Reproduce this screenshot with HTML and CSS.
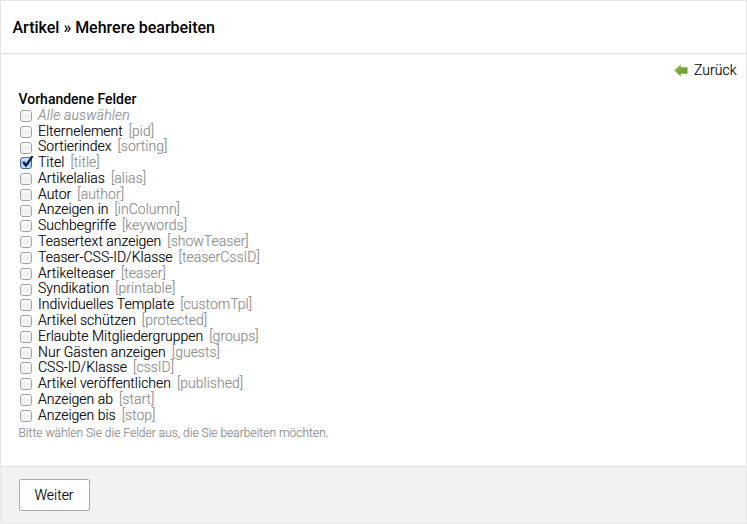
FILE: index.html
```html
<!DOCTYPE html>
<html lang="de">
<head>
<meta charset="utf-8">
<title>Artikel » Mehrere bearbeiten</title>
<link rel="stylesheet" href="styles.css">
</head>
<body>
<main class="panel">
<h1 class="headline">Artikel » Mehrere bearbeiten</h1>
<div class="buttons"><a class="back"><svg class="arrow" width="14" height="13" viewBox="0 0 14 13"><defs><linearGradient id="g" x1="0" y1="0" x2="1" y2="1"><stop offset="0" stop-color="#92b94d"/><stop offset="1" stop-color="#64932b"/></linearGradient></defs><path d="M.3 6.5 6.8.5V3.3H13.5V9.7H6.8V12.5Z" fill="url(#g)"/></svg><span>Zurück</span></a></div>
<form class="form">
<fieldset class="fields">
<h2 class="legend">Vorhandene Felder</h2>
<label class="row all"><input type="checkbox"><span>Alle auswählen</span></label>
<label class="row"><input type="checkbox"><span>Elternelement</span><span class="key">[pid]</span></label>
<label class="row"><input type="checkbox"><span>Sortierindex</span><span class="key">[sorting]</span></label>
<label class="row"><input type="checkbox" checked><svg class="tick" width="15" height="14" viewBox="0 0 15 14"><path d="M3.2 6.8 6 10.6 12.5 1.2" fill="none" stroke="#10192d" stroke-width="2.2"/></svg><span>Titel</span><span class="key">[title]</span></label>
<label class="row"><input type="checkbox"><span>Artikelalias</span><span class="key">[alias]</span></label>
<label class="row"><input type="checkbox"><span>Autor</span><span class="key">[author]</span></label>
<label class="row"><input type="checkbox"><span>Anzeigen in</span><span class="key">[inColumn]</span></label>
<label class="row"><input type="checkbox"><span>Suchbegriffe</span><span class="key">[keywords]</span></label>
<label class="row"><input type="checkbox"><span>Teasertext anzeigen</span><span class="key">[showTeaser]</span></label>
<label class="row"><input type="checkbox"><span>Teaser-CSS-ID/Klasse</span><span class="key">[teaserCssID]</span></label>
<label class="row"><input type="checkbox"><span>Artikelteaser</span><span class="key">[teaser]</span></label>
<label class="row"><input type="checkbox"><span>Syndikation</span><span class="key">[printable]</span></label>
<label class="row"><input type="checkbox"><span>Individuelles Template</span><span class="key">[customTpl]</span></label>
<label class="row"><input type="checkbox"><span>Artikel schützen</span><span class="key">[protected]</span></label>
<label class="row"><input type="checkbox"><span>Erlaubte Mitgliedergruppen</span><span class="key">[groups]</span></label>
<label class="row"><input type="checkbox"><span>Nur Gästen anzeigen</span><span class="key">[guests]</span></label>
<label class="row"><input type="checkbox"><span>CSS-ID/Klasse</span><span class="key">[cssID]</span></label>
<label class="row"><input type="checkbox"><span>Artikel veröffentlichen</span><span class="key">[published]</span></label>
<label class="row"><input type="checkbox"><span>Anzeigen ab</span><span class="key">[start]</span></label>
<label class="row"><input type="checkbox"><span>Anzeigen bis</span><span class="key">[stop]</span></label>
<p class="help">Bitte wählen Sie die Felder aus, die Sie bearbeiten möchten.</p>
</fieldset>
<div class="submit"><button type="button" class="next">Weiter</button></div>
</form>
</main>
</body>
</html>
```
FILE: styles.css
```css
* { box-sizing: border-box; }
body { margin: 0; background: #fff; color: #000; font: 300 14px/16px Roboto, "Liberation Sans", sans-serif; -webkit-text-stroke: .15px; }
.panel { display: flex; flex-direction: column; height: 524px; border: 1px solid #e6e6e6; }
.headline { margin: 0; height: 53px; padding: 0 11.5px; border-bottom: 1px solid #ddd; font-size: 16px; font-weight: 500; line-height: 53px; -webkit-text-stroke: 0; }
.buttons { display: flex; justify-content: flex-end; height: 37px; padding: 8px 9.5px 0 0; }
.back { display: flex; align-items: center; gap: 6px; height: 16px; }
.form { display: flex; flex: 1; flex-direction: column; }
.fields { flex: 1; margin: 0; padding: 0 17.5px; border: 0; }
.legend { margin: 0; height: 16.8px; font-size: 14px; font-weight: 500; line-height: 16px; -webkit-text-stroke: 0; }
.row { display: flex; position: relative; height: 15.79px; line-height: 15.79px; white-space: nowrap; }
.row input { appearance: none; width: 12px; height: 12px; margin: 2.2px 6px 0 1.5px; border: 1px solid #a2a2a2; border-radius: 3px; background: linear-gradient(#fff, #eee 50%, #fafafa); }
.row input:checked { border-color: #4b6594; background: linear-gradient(#d5e9fb, #8fc0ed 50%, #c2ebff); }
.tick { position: absolute; left: 1px; top: 0; }
.key { margin-left: 6px; color: #8c8c8c; }
.all { color: #8c8c8c; font-style: italic; letter-spacing: .2px; }
.help { margin: 2.2px 0 0; color: #8c8c8c; font-size: 12px; line-height: 14px; }
.submit { height: 57px; padding: 12px 18px; border-top: 1px solid #ddd; background: #f2f2f2; }
.next { display: block; width: 71px; height: 32px; padding: 0 1px 0 0; border: 1px solid #aaa; border-radius: 2px; background: #fff; color: #000; font: inherit; }
```
